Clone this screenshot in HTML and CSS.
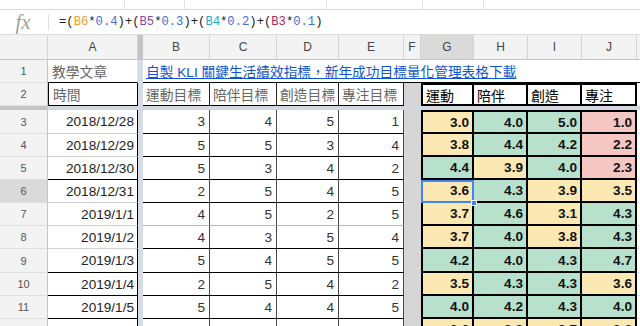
FILE: index.html
```html
<!DOCTYPE html>
<html lang="zh-Hant">
<head>
    <meta charset="UTF-8">
    <meta name="viewport" content="width=device-width, initial-scale=1.0">
    <title>KLI 關鍵生活績效指標</title>
    <link rel="stylesheet" href="styles.css">
</head>
<body>
    <!-- borde inferior de la barra de herramientas -->
    <div class="top-edge">
        <span style="width:125px"></span>
        <span style="width:60px"></span>
        <span style="width:142px"></span>
        <span style="width:96px"></span>
        <span style="width:61px"></span>
    </div>

    <!-- barra de fórmulas -->
    <div class="formula-bar">
        <span class="fx">fx</span>
        <span class="formula">=(<b class="r1">B6</b>*<b class="n">0.4</b>)+(<b class="r2">B5</b>*<b class="n">0.3</b>)+(<b class="r3">B4</b>*<b class="n">0.2</b>)+(<b class="r4">B3</b>*<b class="n">0.1</b>)</span>
    </div>

    <!-- hoja -->
    <div class="sheet">
        <!-- cabecera de columnas -->
        <div class="hd"></div>
        <div class="hd">A</div>
        <div class="fz-h"></div>
        <div class="hd">B</div>
        <div class="hd">C</div>
        <div class="hd">D</div>
        <div class="hd">E</div>
        <div class="hd">F</div>
        <div class="hd on">G</div>
        <div class="hd">H</div>
        <div class="hd">I</div>
        <div class="hd">J</div>
        <div class="hd"></div>

        <!-- fila 1 -->
        <div class="rn">1</div>
        <div class="c gray-text line-dark">教學文章</div>
        <div class="fz"></div>
        <div class="c link-cell"><a href="#">自製 KLI 關鍵生活績效指標，新年成功目標量化管理表格下載</a></div>

        <!-- fila 2 -->
        <div class="rn">2</div>
        <div class="c gray-text boxed">時間</div>
        <div class="fz"></div>
        <div class="c gray-text head-b">運動目標</div>
        <div class="c gray-text head-b">陪伴目標</div>
        <div class="c gray-text head-b">創造目標</div>
        <div class="c gray-text head-b">專注目標</div>
        <div class="gap"></div>
        <div class="c kpi-head first">運動</div>
        <div class="c kpi-head">陪伴</div>
        <div class="c kpi-head">創造</div>
        <div class="c kpi-head">專注</div>
        <div class="c"></div>

        <!-- línea de inmovilización -->
        <div class="fz-h"></div>
        <div class="fz-row"></div>

        <!-- fila 3 -->
        <div class="rn">3</div>
        <div class="c date soft">2018/12/28</div>
        <div class="fz"></div>
        <div class="c val">3</div><div class="c val">4</div><div class="c val">5</div><div class="c val">1</div>
        <div class="gap"></div>
        <div class="c kpi first top y">3.0</div><div class="c kpi top g">4.0</div><div class="c kpi top g">5.0</div><div class="c kpi top p">1.0</div>
        <div class="c"></div>

        <!-- fila 4 -->
        <div class="rn">4</div>
        <div class="c date soft">2018/12/29</div>
        <div class="fz"></div>
        <div class="c val">5</div><div class="c val">5</div><div class="c val">3</div><div class="c val">4</div>
        <div class="gap"></div>
        <div class="c kpi first y">3.8</div><div class="c kpi g">4.4</div><div class="c kpi g">4.2</div><div class="c kpi p">2.2</div>
        <div class="c"></div>

        <!-- fila 5 -->
        <div class="rn">5</div>
        <div class="c date">2018/12/30</div>
        <div class="fz"></div>
        <div class="c val">5</div><div class="c val">3</div><div class="c val">4</div><div class="c val">2</div>
        <div class="gap"></div>
        <div class="c kpi first g">4.4</div><div class="c kpi y">3.9</div><div class="c kpi g">4.0</div><div class="c kpi p">2.3</div>
        <div class="c"></div>

        <!-- fila 6 (seleccionada) -->
        <div class="rn on">6</div>
        <div class="c date soft">2018/12/31</div>
        <div class="fz"></div>
        <div class="c val">2</div><div class="c val">5</div><div class="c val">4</div><div class="c val">5</div>
        <div class="gap"></div>
        <div class="c kpi first y selected">3.6<span class="sel-box"><i class="handle"></i></span></div><div class="c kpi g">4.3</div><div class="c kpi y">3.9</div><div class="c kpi y">3.5</div>
        <div class="c"></div>

        <!-- fila 7 -->
        <div class="rn">7</div>
        <div class="c date soft">2019/1/1</div>
        <div class="fz"></div>
        <div class="c val soft">4</div><div class="c val soft">5</div><div class="c val soft">2</div><div class="c val soft">5</div>
        <div class="gap"></div>
        <div class="c kpi first y">3.7</div><div class="c kpi g">4.6</div><div class="c kpi y">3.1</div><div class="c kpi g">4.3</div>
        <div class="c"></div>

        <!-- fila 8 -->
        <div class="rn">8</div>
        <div class="c date soft">2019/1/2</div>
        <div class="fz"></div>
        <div class="c val">4</div><div class="c val">3</div><div class="c val">5</div><div class="c val">4</div>
        <div class="gap"></div>
        <div class="c kpi first y">3.7</div><div class="c kpi g">4.0</div><div class="c kpi y">3.8</div><div class="c kpi g">4.3</div>
        <div class="c"></div>

        <!-- fila 9 -->
        <div class="rn">9</div>
        <div class="c date">2019/1/3</div>
        <div class="fz"></div>
        <div class="c val">5</div><div class="c val">4</div><div class="c val">5</div><div class="c val">5</div>
        <div class="gap"></div>
        <div class="c kpi first g">4.2</div><div class="c kpi g">4.0</div><div class="c kpi g">4.3</div><div class="c kpi g">4.7</div>
        <div class="c"></div>

        <!-- fila 10 -->
        <div class="rn">10</div>
        <div class="c date">2019/1/4</div>
        <div class="fz"></div>
        <div class="c val">2</div><div class="c val">5</div><div class="c val">4</div><div class="c val">2</div>
        <div class="gap"></div>
        <div class="c kpi first y">3.5</div><div class="c kpi g">4.3</div><div class="c kpi g">4.3</div><div class="c kpi y">3.6</div>
        <div class="c"></div>

        <!-- fila 11 -->
        <div class="rn">11</div>
        <div class="c date">2019/1/5</div>
        <div class="fz"></div>
        <div class="c val">5</div><div class="c val">4</div><div class="c val">4</div><div class="c val">5</div>
        <div class="gap"></div>
        <div class="c kpi first g">4.0</div><div class="c kpi g">4.2</div><div class="c kpi g">4.3</div><div class="c kpi g">4.0</div>
        <div class="c"></div>

        <!-- fila 12 (cortada por el borde) -->
        <div class="rn"></div>
        <div class="c date"></div>
        <div class="fz"></div>
        <div class="c val"></div><div class="c val"></div><div class="c val"></div><div class="c val"></div>
        <div class="gap"></div>
        <div class="c kpi first y">3.6</div><div class="c kpi y">3.8</div><div class="c kpi y">3.7</div><div class="c kpi y">3.6</div>
        <div class="c"></div>
    </div>
</body>
</html>
```

FILE: styles.css
```css
/* Hoja de cálculo estilo Google Sheets */
body {
    margin: 0;
    overflow: hidden;
    background: #fff;
    font-family: "Liberation Sans", "Noto Sans CJK TC", sans-serif;
}

* {
    box-sizing: border-box;
}

/* borde de la barra de herramientas (cortada) */
.top-edge {
    display: flex;
    height: 10px;
    border-bottom: 1px solid #dadada;
}

.top-edge span {
    border-right: 1px solid #e2e2e2;
}

/* barra de fórmulas */
.formula-bar {
    display: flex;
    align-items: center;
    height: 25px;
    border-bottom: 1px solid #dadada;
}

.fx {
    width: 49px;
    height: 16px;
    line-height: 16px;
    border-right: 1px solid #e0e0e0;
    text-align: center;
    font-family: "Liberation Serif", serif;
    font-style: italic;
    font-size: 21px;
    color: #a0a0a0;
    padding-right: 2px;
}

.formula {
    padding-left: 10px;
    font-family: "Liberation Mono", monospace;
    font-size: 12.2px;
    color: #222;
}

.formula b {
    font-weight: normal;
}

.formula .r1 { color: #f39c26; }
.formula .r2 { color: #8a4b9e; }
.formula .r3 { color: #25a8c9; }
.formula .r4 { color: #b02a5a; }
.formula .n { color: #3c6fd6; }

/* rejilla */
.sheet {
    display: grid;
    grid-template-columns: 48px 90px 5px 67px 67px 62px 65px 17px 53px 54px 54px 55px 1fr;
    grid-template-rows: 25px 23px 23px 4px 24px 23px 23px 23px 23px 23px 24px 23px 23px 23px;
}

.hd {
    display: flex;
    align-items: center;
    justify-content: center;
    background: #f3f3f3;
    border-right: 1px solid #d4d4d4;
    border-bottom: 1px solid #c4c4c4;
    font-size: 12px;
    color: #444;
}

.hd.on,
.rn.on {
    background: #dadada;
}

.rn {
    display: flex;
    align-items: center;
    justify-content: center;
    background: #f3f3f3;
    border-right: 1px solid #c4c4c4;
    border-bottom: 1px solid #dedede;
    font-size: 11px;
    color: #555;
}

.fz-h {
    background: #c4c4c4;
}

.fz {
    background: #d6dce6;
}

.fz-row {
    grid-column: 2 / -1;
    background: #d2d8e1;
}

.c {
    display: flex;
    align-items: center;
    padding: 0 4px;
    white-space: nowrap;
    border-right: 1px solid #e2e2e2;
    border-bottom: 1px solid #e2e2e2;
    font-size: 13.6px;
    color: #222;
}

.gray-text {
    color: #666;
    font-size: 13.8px;
}

.line-dark {
    border-bottom-color: #000;
}

/* fila 1: enlace que desborda */
.link-cell {
    grid-column: 4 / -1;
    border-right: none;
    border-bottom-color: #000;
    padding-left: 3px;
}

.link-cell a {
    color: #1155cc;
    font-size: 13.7px;
}

.boxed {
    border-left: 1px solid #000;
    border-right: 1px solid #000;
    border-bottom: 1px solid #000;
}

.head-b {
    border-right: 1px solid #222;
    border-bottom: 1px solid #000;
    padding-left: 3px;
}

.gap {
    background: #d6d6d6;
}

/* columna A */
.date {
    justify-content: flex-end;
    padding-right: 3px;
    border-right: 1px solid #000;
    border-bottom: 1px solid #000;
}

.date.soft {
    border-bottom-color: #d0d0d0;
}

/* columnas B-E */
.val {
    justify-content: flex-end;
    color: #333;
    border-right: 1px solid #4a4a4a;
    border-bottom: 1px solid #000;
}

.val.soft {
    border-bottom-color: #b8b8b8;
}

/* columnas G-J */
.kpi-head {
    border-top: 2px solid #000;
    border-right: 2px solid #000;
    border-bottom: 2px solid #000;
    color: #000;
    font-size: 14px;
    padding-left: 3px;
}

.kpi {
    justify-content: flex-end;
    padding-right: 3px;
    border-right: 2px solid #000;
    border-bottom: 2px solid #000;
    font-weight: bold;
    color: #111;
}

.first {
    border-left: 2px solid #000;
}

.top {
    border-top: 2px solid #000;
}

.y { background: #fce8b2; }
.g { background: #b7e1cd; }
.p { background: #f4c7c3; }

/* celda seleccionada */
.selected {
    position: relative;
}

.sel-box {
    position: absolute;
    top: 0;
    left: -2px;
    right: -2px;
    bottom: -2px;
    border: 2px solid #4285f4;
    z-index: 2;
}

.handle {
    position: absolute;
    right: -5px;
    bottom: -5px;
    width: 6px;
    height: 6px;
    background: #4285f4;
    border: 1px solid #fff;
}
```
